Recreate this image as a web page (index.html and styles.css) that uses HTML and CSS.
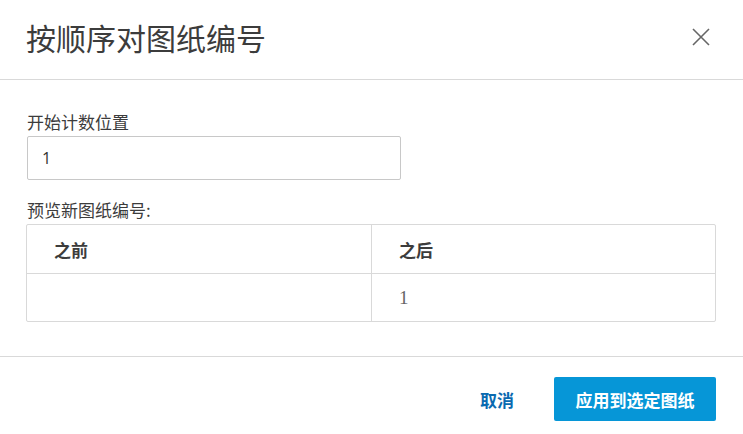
FILE: index.html
```html
<!DOCTYPE html>
<html lang="zh-CN">
<head>
<meta charset="utf-8">
<link rel="stylesheet" href="styles.css">
</head>
<body>
<div class="dialog">
  <div class="header">
    <h1 class="title">按顺序对图纸编号</h1>
    <button class="close" aria-label="关闭">
      <svg width="18" height="18" viewBox="0 0 18 18"><path d="M1 1 L17 17 M17 1 L1 17" stroke="#666" stroke-width="1.6" fill="none"/></svg>
    </button>
  </div>
  <div class="body">
    <label class="label">开始计数位置</label>
    <div class="input">1</div>
    <div class="label preview">预览新图纸编号:</div>
    <div class="table">
      <div class="row head">
        <div class="cell">之前</div>
        <div class="cell">之后</div>
      </div>
      <div class="row">
        <div class="cell"></div>
        <div class="cell num">1</div>
      </div>
    </div>
  </div>
  <div class="footer">
    <button class="btn-link">取消</button>
    <button class="btn-primary">应用到选定图纸</button>
  </div>
</div>
</body>
</html>
```
FILE: styles.css
```css
* { box-sizing: border-box; }
html, body { margin: 0; padding: 0; background: #fff; }
body {
  font-family: "Noto Sans CJK SC", "Liberation Sans", sans-serif;
  color: #333;
  width: 743px;
  height: 434px;
  overflow: hidden;
}
.dialog { display: flex; flex-direction: column; }
.header {
  height: 80px;
  border-bottom: 1px solid #d9d9d9;
  display: flex;
  align-items: center;
  justify-content: space-between;
  padding: 0 33px 0 26px;
}
.title {
  margin: 0;
  font-size: 30px;
  font-weight: 400;
  color: #3c3c3c;
  line-height: 1;
  padding-bottom: 6px;
}
.close {
  border: 0;
  background: none;
  padding: 0;
  width: 18px;
  height: 18px;
  display: flex;
  margin-bottom: 6px;
}
.body {
  padding: 30px 27px 34px 27px;
  display: flex;
  flex-direction: column;
}
.label {
  font-size: 17px;
  line-height: 24px;
  color: #3c3c3c;
}
.input {
  margin-top: 2px;
  width: 374px;
  height: 44px;
  border: 1px solid #c8c8c8;
  border-radius: 2px;
  padding: 0 14px;
  display: flex;
  align-items: center;
  font-family: "Open Sans", "Liberation Sans", sans-serif;
  font-size: 16px;
  color: #333;
}
.preview { margin-top: 18px; }
.table {
  margin-top: 2px;
  width: 690px;
  border: 1px solid #d9d9d9;
  border-radius: 2px;
  margin-left: -1px;
}
.row { display: grid; grid-template-columns: 344px 1fr; height: 48px; }
.row + .row { border-top: 1px solid #d9d9d9; }
.cell {
  display: flex;
  align-items: center;
  padding-left: 27px;
  font-size: 17px;
}
.cell + .cell { border-left: 1px solid #d9d9d9; }
.head .cell { font-weight: 700; color: #3c3c3c; }
.num {
  font-family: "Liberation Serif", serif;
  color: #666;
  font-size: 19px;
}
.footer {
  border-top: 1px solid #d9d9d9;
  height: 80px;
  display: flex;
  justify-content: flex-end;
  align-items: flex-start;
  padding: 20px 27px 0 0;
  gap: 40px;
}
.btn-link {
  border: 0;
  background: none;
  font-family: inherit;
  font-size: 17px;
  font-weight: 700;
  color: #0a6ab0;
  padding: 0;
  height: 44px;
}
.btn-primary {
  border: 0;
  background: #0696d7;
  color: #fff;
  font-family: inherit;
  font-size: 17px;
  font-weight: 700;
  width: 162px;
  height: 44px;
  border-radius: 2px;
}
```
